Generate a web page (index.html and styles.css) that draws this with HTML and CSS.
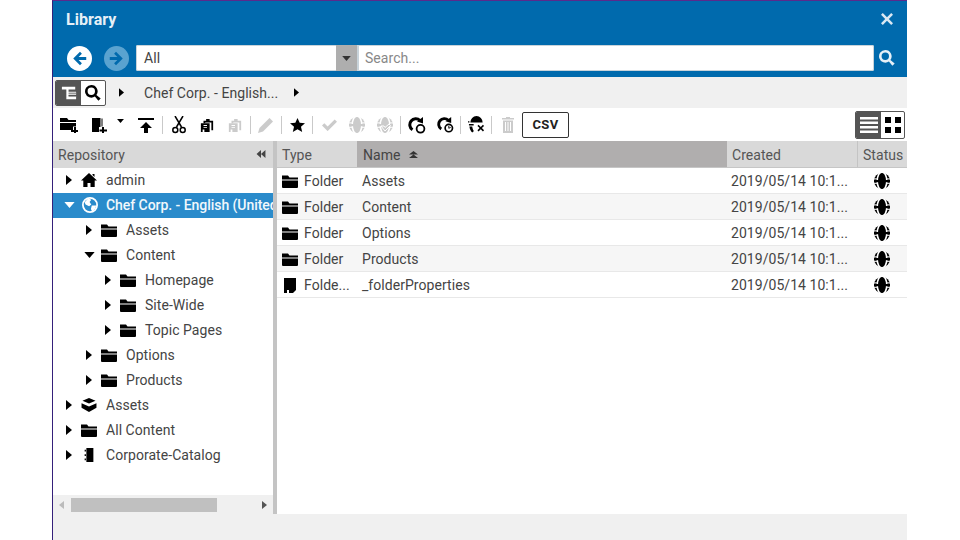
FILE: index.html
```html
<!DOCTYPE html>
<html lang="en">
<head>
<meta charset="utf-8">
<title>Library</title>
<link rel="stylesheet" href="styles.css">
</head>
<body>
<svg class="defs" width="0" height="0" aria-hidden="true">
  <symbol id="folder" viewBox="0 0 16 14"><path d="M0 1.500h6l1.500 2H16V5.500H0zM0 6.500h16V13a1 1 0 0 1-1 1H1a1 1 0 0 1-1-1z"/></symbol>
  <symbol id="right" viewBox="0 0 6 10"><path d="M0 0l6 5-6 5z"/></symbol>
  <symbol id="down" viewBox="0 0 12 7"><path d="M0 0h12L6 7z"/></symbol>
  <symbol id="globe" viewBox="0 0 16 16"><circle cx="8" cy="8" r="8"/><ellipse cx="8" cy="8" rx="4.800" ry="9" fill="none" stroke="#fff" stroke-width="1.600"/><path d="M0 7h16v2.200H0z"/><path d="M0 5.900h3.200M12.800 5.900H16M0 10.300h3.200M12.800 10.300H16" stroke="#fff" stroke-width="1"/></symbol>
  <symbol id="mag" viewBox="0 0 16 16"><path fill-rule="evenodd" d="M6.300 0a6.300 6.300 0 0 1 5.100 10l4.300 3.400-2.300 2.400-3.500-4.300A6.300 6.300 0 1 1 6.300 0zm0 2.600a3.700 3.700 0 1 0 0 7.400 3.700 3.700 0 0 0 0-7.400z"/></symbol>
  <symbol id="doc" viewBox="0 0 12 16"><path d="M0 1h9l3 0v15H5v-3H3v3H0z"/><path d="M9 16l3-3v3z" fill="#fff"/></symbol>
  <symbol id="refresh" viewBox="0 0 18 18"><path d="M12 4.500A6 6 0 1 0 4.500 13.800" fill="none" stroke="#000" stroke-width="3"/><path d="M9 5.500L15 1v6.500z"/></symbol>
</svg>
<main class="window">
  <header class="head">
    <div class="title-row">
      <h1 class="title">Library</h1>
      <svg class="close" viewBox="0 0 12 12"><path d="M1.800 0L6 4.200 10.200 0 12 1.800 7.800 6 12 10.200 10.200 12 6 7.800 1.800 12 0 10.200 4.200 6 0 1.800z"/></svg>
    </div>
    <div class="search-row">
      <svg class="nav" viewBox="0 0 26 26"><circle cx="13" cy="13" r="13" fill="#fff"/><path d="M13.500 6L6.500 13l7 7 2-2-3.400-3.400h7.900v-3.200h-7.900L15.500 8z" fill="#006aad"/></svg>
      <svg class="nav nav-off" viewBox="0 0 26 26"><circle cx="13" cy="13" r="13" fill="#5aa3d0"/><path d="M12.500 6l7 7-7 7-2-2 3.400-3.400H6v-3.200h7.900L10.500 8z" fill="#006aad"/></svg>
      <div class="select"><span class="select-text">All</span><span class="select-btn"><svg class="select-arrow"><use href="#down"/></svg></span></div>
      <div class="search">Search...</div>
      <svg class="search-go"><use href="#mag"/></svg>
    </div>
  </header>

  <div class="crumbs">
    <div class="toggle">
      <span class="tog on">
        <svg class="tog-icon" viewBox="0 0 18 18"><path d="M1 2h15v3H8.500v2.500H17v3.500H8.500v1.500H17V16H6V5H1z" fill="#fff"/><path d="M8.500 9.200H17M8.500 12.500H17" stroke="#555" stroke-width="1"/></svg>
      </span>
      <span class="tog"><svg class="tog-icon"><use href="#mag"/></svg></span>
    </div>
    <svg class="crumb-arrow first"><use href="#right"/></svg>
    <span class="crumb-text">Chef Corp. - English...</span>
    <svg class="crumb-arrow"><use href="#right"/></svg>
  </div>

  <div class="tools">
    <svg class="ti t-a" viewBox="0 0 18 16"><path d="M0 1h7l1.500 2H16v2H0zM0 6h16v3.500h-3V13H0z"/><path d="M14 10h2v3h2v2h-2v1h-2v-1h-3v-2h3z"/></svg>
    <svg class="ti t-b" viewBox="0 0 16 16"><path d="M1 1h8.500v9H8v5H1z"/><path d="M10.500 1.500h1v8h-1z"/><path d="M11 10h2v2.500h3v2h-3V16h-2v-1.500H8.500v-2H11z"/></svg>
    <svg class="tc"><use href="#down"/></svg>
    <svg class="ti t-c" viewBox="0 0 16 16"><path d="M0 1h16v2H0zM8 5l6 6h-4v5H6v-5H2z"/></svg>
    <i class="sep s1"></i>
    <svg class="ti t-d" viewBox="0 0 14 18" fill="none" stroke="#000" stroke-width="1.500"><path d="M3 0l6.500 11M11 0L4.500 11"/><circle cx="3.300" cy="14" r="2.500"/><circle cx="10.700" cy="14" r="2.500"/></svg>
    <svg class="ti t-e" viewBox="0 0 16 16"><path d="M4 3h3V1h4v2h4v11h-2V5H6v1H4z"/><path d="M1 6h10v10H5v-3H3v3H1z"/><path d="M4 8h4v1H4zM4 10.500h4v1H4z" fill="#fff"/></svg>
    <svg class="ti off t-f" viewBox="0 0 16 16"><path d="M4 3h3V1h4v2h4v11h-2V5H6v1H4z"/><path d="M1 6h10v10H5v-3H3v3H1z"/><path d="M4 8h4v1H4zM4 10.500h4v1H4z" fill="#fff"/></svg>
    <i class="sep s2"></i>
    <svg class="ti off t-g" viewBox="0 0 16 16"><path d="M11.500 1L15 4.500 5 14.500 0 16l1.500-5z"/></svg>
    <i class="sep s3"></i>
    <svg class="ti t-h" viewBox="0 0 16 16"><path d="M8 .500l2.300 5.200 5.700.5-4.300 3.700 1.300 5.600L8 12.600l-5 2.900 1.300-5.600L0 6.200l5.700-.5z"/></svg>
    <i class="sep s4"></i>
    <svg class="ti off t-i" viewBox="0 0 16 12"><path d="M0 6.500l2.500-2.500 3.500 3.500L13.500 0 16 2.500 6 12.500z"/></svg>
    <svg class="ti off t-j"><use href="#globe"/></svg>
    <svg class="ti off t-k" viewBox="0 0 16 16"><use href="#globe"/><path d="M4 9h3l1 1.500L12 7l1.500 1.500L8 14l-4-5z" stroke="#fff" stroke-width="1"/></svg>
    <i class="sep s5"></i>
    <svg class="ti t-l" viewBox="0 0 18 18"><use href="#refresh"/><circle cx="12.500" cy="12.800" r="3.900" fill="#fff" stroke="#000" stroke-width="1.800"/></svg>
    <svg class="ti t-m" viewBox="0 0 18 18"><use href="#refresh"/><circle cx="12.500" cy="12.800" r="3.900" fill="#fff" stroke="#000" stroke-width="1.800"/><path d="M12.500 10.500v2.500l2-1" fill="none" stroke="#000"/></svg>
    <i class="sep s6"></i>
    <svg class="ti t-n" viewBox="0 0 18 18"><path d="M9 0a7 7 0 0 1 6.500 7h-13A7 7 0 0 1 9 0zM1 8.500h5v1.500H1z"/><path d="M0 5.500h1.500V7H0zM1.500 11h3c.2 2 .8 3.500 1.800 5l-1.800 1.500C3 16 1.800 14 1.500 11z"/><path d="M10 10.500l1.200-1.200 2.300 2.300 2.300-2.300 1.200 1.200-2.300 2.300 2.300 2.300-1.200 1.200-2.300-2.300-2.300 2.300-1.200-1.200 2.300-2.300z"/></svg>
    <i class="sep s7"></i>
    <svg class="ti off t-o" viewBox="0 0 12 16"><path d="M0 1h12v1.500H0zM4 0h4v1H4zM1 3.500h10V16H1z"/><path d="M3 5h1v9H3zM5.500 5h1v9h-1zM8 5h1v9H8z" fill="#fff"/></svg>
    <button class="csv" type="button">CSV</button>
    <div class="views">
      <span class="vw on"><svg class="vw-icon" viewBox="0 0 18 16"><path d="M0 0h18v2.500H0zM0 4.500h18V7H0zM0 9h18v2.500H0zM0 13.500h18V16H0z" fill="#fff"/></svg></span>
      <span class="vw"><svg class="vw-icon" viewBox="0 0 16 16"><path d="M0 0h6v6H0zM10 0h6v6h-6zM0 10h6v6H0zM10 10h6v6h-6z"/></svg></span>
    </div>
  </div>

  <div class="body">
    <aside class="side">
      <div class="side-head"><span>Repository</span>
        <svg class="collapse" viewBox="0 0 10 9"><path d="M5 0v9L0 4.500zM10 0v9L5 4.500z"/></svg>
      </div>
      <div class="tree">
        <div class="node"><svg class="exp"><use href="#right"/></svg><svg class="ico" viewBox="0 0 16 14"><path d="M8 0l8 7.500h-2.300V14H9.500v-4h-3v4H2.300V7.500H0zM11.500 1h2v3l-2-2z"/></svg><span>admin</span></div>
        <div class="node sel"><svg class="exp dn"><use href="#down"/></svg><svg class="ico" viewBox="0 0 18 18"><circle cx="9" cy="9" r="8" fill="none" stroke="#fff" stroke-width="2"/><path d="M3 6l4-4.500 3.500 1.500-2 2.500 2 3-2.500 2-4-2zM11 9.500h5l-1 3.500-3.500 3.500-1.500-3z" fill="#fff"/></svg><span>Chef Corp. - English (United States)</span></div>
        <div class="node l1"><svg class="exp"><use href="#right"/></svg><svg class="ico"><use href="#folder"/></svg><span>Assets</span></div>
        <div class="node l1"><svg class="exp dn"><use href="#down"/></svg><svg class="ico"><use href="#folder"/></svg><span>Content</span></div>
        <div class="node l2"><svg class="exp"><use href="#right"/></svg><svg class="ico"><use href="#folder"/></svg><span>Homepage</span></div>
        <div class="node l2"><svg class="exp"><use href="#right"/></svg><svg class="ico"><use href="#folder"/></svg><span>Site-Wide</span></div>
        <div class="node l2"><svg class="exp"><use href="#right"/></svg><svg class="ico"><use href="#folder"/></svg><span>Topic Pages</span></div>
        <div class="node l1"><svg class="exp"><use href="#right"/></svg><svg class="ico"><use href="#folder"/></svg><span>Options</span></div>
        <div class="node l1"><svg class="exp"><use href="#right"/></svg><svg class="ico"><use href="#folder"/></svg><span>Products</span></div>
        <div class="node"><svg class="exp"><use href="#right"/></svg><svg class="ico" viewBox="0 0 16 15"><path d="M8 0l7 3-7 3-7-3zM0 5.500L8 9l8-3.500v5L8 15l-8-4.500z"/></svg><span>Assets</span></div>
        <div class="node"><svg class="exp"><use href="#right"/></svg><svg class="ico"><use href="#folder"/></svg><span>All Content</span></div>
        <div class="node"><svg class="exp"><use href="#right"/></svg><svg class="ico" viewBox="0 0 16 16"><path d="M5 0h8v16H5zM3 2h1.500v2H3zM3 7h1.500v2H3zM3 12h1.500v2H3z"/></svg><span>Corporate-Catalog</span></div>
      </div>
      <div class="hscroll">
        <svg class="sb-l" viewBox="0 0 5 8"><path d="M5 0v8L0 4z"/></svg>
        <div class="sb-track"><div class="sb-thumb"></div></div>
        <svg class="sb-r" viewBox="0 0 5 8"><path d="M0 0v8l5-4z"/></svg>
      </div>
    </aside>
    <div class="split"></div>
    <section class="list">
      <div class="row-head">
        <div class="c c-type">Type</div>
        <div class="c c-name sorted">Name<svg class="sort" viewBox="0 0 9 7"><path d="M4.500 0L9 3.500H0zM4.500 3.500L9 7H0z"/></svg></div>
        <div class="c c-created">Created</div>
        <div class="c c-status">Status</div>
      </div>
      <div class="row"><div class="c c-type"><svg class="ico"><use href="#folder"/></svg><span>Folder</span></div><div class="c c-name">Assets</div><div class="c c-created">2019/05/14 10:1...</div><div class="c c-status"><svg class="st"><use href="#globe"/></svg></div></div>
      <div class="row alt"><div class="c c-type"><svg class="ico"><use href="#folder"/></svg><span>Folder</span></div><div class="c c-name">Content</div><div class="c c-created">2019/05/14 10:1...</div><div class="c c-status"><svg class="st"><use href="#globe"/></svg></div></div>
      <div class="row"><div class="c c-type"><svg class="ico"><use href="#folder"/></svg><span>Folder</span></div><div class="c c-name">Options</div><div class="c c-created">2019/05/14 10:1...</div><div class="c c-status"><svg class="st"><use href="#globe"/></svg></div></div>
      <div class="row alt"><div class="c c-type"><svg class="ico"><use href="#folder"/></svg><span>Folder</span></div><div class="c c-name">Products</div><div class="c c-created">2019/05/14 10:1...</div><div class="c c-status"><svg class="st"><use href="#globe"/></svg></div></div>
      <div class="row"><div class="c c-type"><svg class="ico doc-ico"><use href="#doc"/></svg><span>Folde...</span></div><div class="c c-name">_folderProperties</div><div class="c c-created">2019/05/14 10:1...</div><div class="c c-status"><svg class="st"><use href="#globe"/></svg></div></div>
    </section>
  </div>
  <footer class="foot"></footer>
</main>
</body>
</html>
```
FILE: styles.css
```css
* { box-sizing: border-box; }
html, body { margin: 0; padding: 0; background: #fff; overflow: hidden; }
body { font-family: Roboto, "Liberation Sans", sans-serif; font-size: 14px; letter-spacing: .05px; color: #444; }
.defs { display: block; height: 0; }
svg { display: block; flex: none; }

.window { margin-left: 52px; width: 855px; height: 540px; border-left: 1px solid #35207a; border-top: 1px solid #5b2a8c; display: flex; flex-direction: column; overflow: hidden; background: #f0f0f0; }

.head { background: #006aad; height: 76px; flex: none; }
.title-row { height: 38px; display: flex; align-items: center; justify-content: space-between; padding: 0 14px 2px 13px; }
.title { margin: 0; font-size: 16px; font-weight: 700; color: #e6f0f7; }
.close { width: 12px; height: 12px; fill: #d9e8f3; }
.search-row { display: flex; align-items: center; height: 38px; padding: 0 0 0 14px; }
.nav { width: 25px; height: 25px; }
.nav-off { margin-left: 12px; }
.select { margin-left: 7px; width: 222px; height: 26px; background: #fff; border-radius: 2px 0 0 2px; display: flex; justify-content: space-between; box-shadow: inset 0 0 0 1px #c8d3da; }
.select-text { padding: 0 8px; line-height: 26px; color: #444; }
.select-btn { width: 21px; margin-right: 1px; background: #aeaeae; display: flex; align-items: center; justify-content: center; }
.select-arrow { width: 9px; height: 5px; fill: #333; }
.search { width: 516px; height: 26px; background: #fff; line-height: 26px; padding-left: 7px; color: #888; border-radius: 0 2px 2px 0; box-shadow: inset 0 0 0 1px #c8d3da; }
.search-go { width: 16px; height: 16px; margin-left: 5px; fill: #e6f0f7; }

.crumbs { height: 31px; flex: none; background: #f0f0f0; display: flex; align-items: center; padding-left: 2px; }
.toggle { display: flex; width: 51px; height: 26px; border: 1px solid #555; border-radius: 2px; background: #fff; overflow: hidden; }
.tog { flex: 1; display: flex; align-items: center; justify-content: center; }
.tog.on { background: #555; width: 25px; flex: none; }
.tog-icon { width: 16px; height: 16px; }
.crumb-arrow { width: 5px; height: 9px; }
.crumb-arrow.first { margin-left: 13px; }
.crumb-text { margin: 0 16px 0 20px; color: #444; width: 134px; white-space: nowrap; }

.tools { height: 33px; flex: none; background: #fff; display: flex; align-items: center; padding-left: 7px; }
.ti { height: 16px; width: 16px; }
.off { opacity: .2; }
.sep { display: block; width: 1px; height: 18px; background: #c9c9c9; flex: none; }
.t-a { width: 18px; }
.t-b { margin-left: 13px; }
.tc { margin-left: 10px; width: 7px; height: 4px; margin-top: -7px; }
.t-c { margin-left: 14px; }
.s1 { margin-left: 8px; }
.t-d { margin-left: 9px; width: 14px; height: 18px; }
.t-e { margin-left: 14px; width: 14px; }
.t-f { margin-left: 14px; width: 14px; }
.s2 { margin-left: 8px; }
.t-g { margin-left: 7px; }
.s3 { margin-left: 7px; }
.t-h { margin-left: 8px; width: 15px; }
.s4 { margin-left: 7px; }
.t-i { margin-left: 9px; width: 15px; height: 12px; }
.t-j { margin-left: 12px; }
.t-k { margin-left: 12px; }
.s5 { margin-left: 7px; }
.t-l { margin-left: 7px; width: 18px; height: 18px; }
.t-m { margin-left: 11px; width: 17px; height: 17px; }
.s6 { margin-left: 6px; }
.t-n { margin-left: 7px; width: 17px; height: 17px; }
.s7 { margin-left: 6px; }
.t-o { margin-left: 10px; width: 12px; }
.csv { margin-left: 8px; width: 47px; height: 26px; background: #fff; border: 1.500px solid #333; border-radius: 2px; font: 700 13px Roboto, sans-serif; color: #222; padding: 0; letter-spacing: .3px; }
.views { margin-left: auto; margin-right: 2px; display: flex; width: 50px; height: 28px; border: 1px solid #555; border-radius: 2px; background: #fff; overflow: hidden; }
.vw { flex: 1; display: flex; align-items: center; justify-content: center; }
.vw.on { background: #555; width: 25px; flex: none; }
.vw-icon { width: 18px; height: 16px; }
.vw:not(.on) .vw-icon { width: 16px; }

.body { height: 373px; flex: none; display: flex; background: #fff; }
.side { width: 220px; flex: none; display: flex; flex-direction: column; }
.side-head { height: 27px; background: #d9d9d9; display: flex; align-items: center; justify-content: space-between; padding: 0 7px 0 5px; color: #555; }
.collapse { width: 10px; height: 8px; fill: #444; margin-top: -1px; }
.tree { flex: 1; overflow: hidden; }
.node { height: 25px; display: flex; align-items: center; padding-left: 13px; padding-bottom: 1px; white-space: nowrap; overflow: hidden; color: #444; }
.node.l1 { padding-left: 33px; }
.node.l2 { padding-left: 52px; }
.node .exp { width: 6px; height: 10px; margin-right: 9px; }
.node .exp.dn { width: 11px; height: 6px; margin: 0 6px 0 -2px; }
.node .ico { width: 16px; height: 14px; margin-right: 9px; }
.node.sel { background: #2a8bcb; color: #f2f8fc; font-weight: 500; letter-spacing: -.05px; }
.node.sel .exp { fill: #fff; }
.node.sel .ico { width: 16px; height: 16px; margin: 0 8px 0 1px; }
.hscroll { height: 19px; background: #f0f0f0; display: flex; align-items: center; padding: 0 6px; flex: none; }
.sb-l, .sb-r { width: 5px; height: 8px; }
.sb-l { fill: #bbb; }
.sb-r { fill: #555; }
.sb-track { flex: 1; padding-left: 7px; padding-right: 45px; }
.sb-thumb { height: 14px; background: #c0c0c0; }
.split { width: 4px; flex: none; background: #c4c4c4; }

.list { flex: 1; min-width: 0; }
.row-head { height: 27px; display: flex; background: #d9d9d9; border-bottom: 1px solid #c6c6c6; color: #555; }
.row-head .c { align-items: center; padding-left: 5px; padding-top: 1px; }
.row-head .c-status { border-left: 1px solid #c4c4c4; padding-left: 5px; }
.row { height: 26px; display: flex; border-bottom: 1px solid #e8e8e8; background: #fff; padding-top: 1px; }
.row.alt { background: #f6f6f6; }
.c { display: flex; align-items: center; white-space: nowrap; overflow: hidden; flex: none; }
.c-type { width: 80px; padding-left: 5px; }
.c-name { width: 370px; padding-left: 5px; }
.c-created { width: 130px; padding-left: 4px; }
.c-status { width: 50px; justify-content: flex-start; padding-left: 17px; }
.row-head .c-name { padding-left: 6px; }
.sorted { background: #b0aeae; color: #444; }
.sort { width: 9px; height: 7px; margin-left: 8px; fill: #333; }
.row .ico { width: 16px; height: 14px; margin-right: 6px; }
.row .doc-ico { width: 12px; height: 16px; margin: 0 8px 0 2px; }
.st { width: 16px; height: 16px; }
.foot { flex: 1; background: #f0f0f0; }
```
